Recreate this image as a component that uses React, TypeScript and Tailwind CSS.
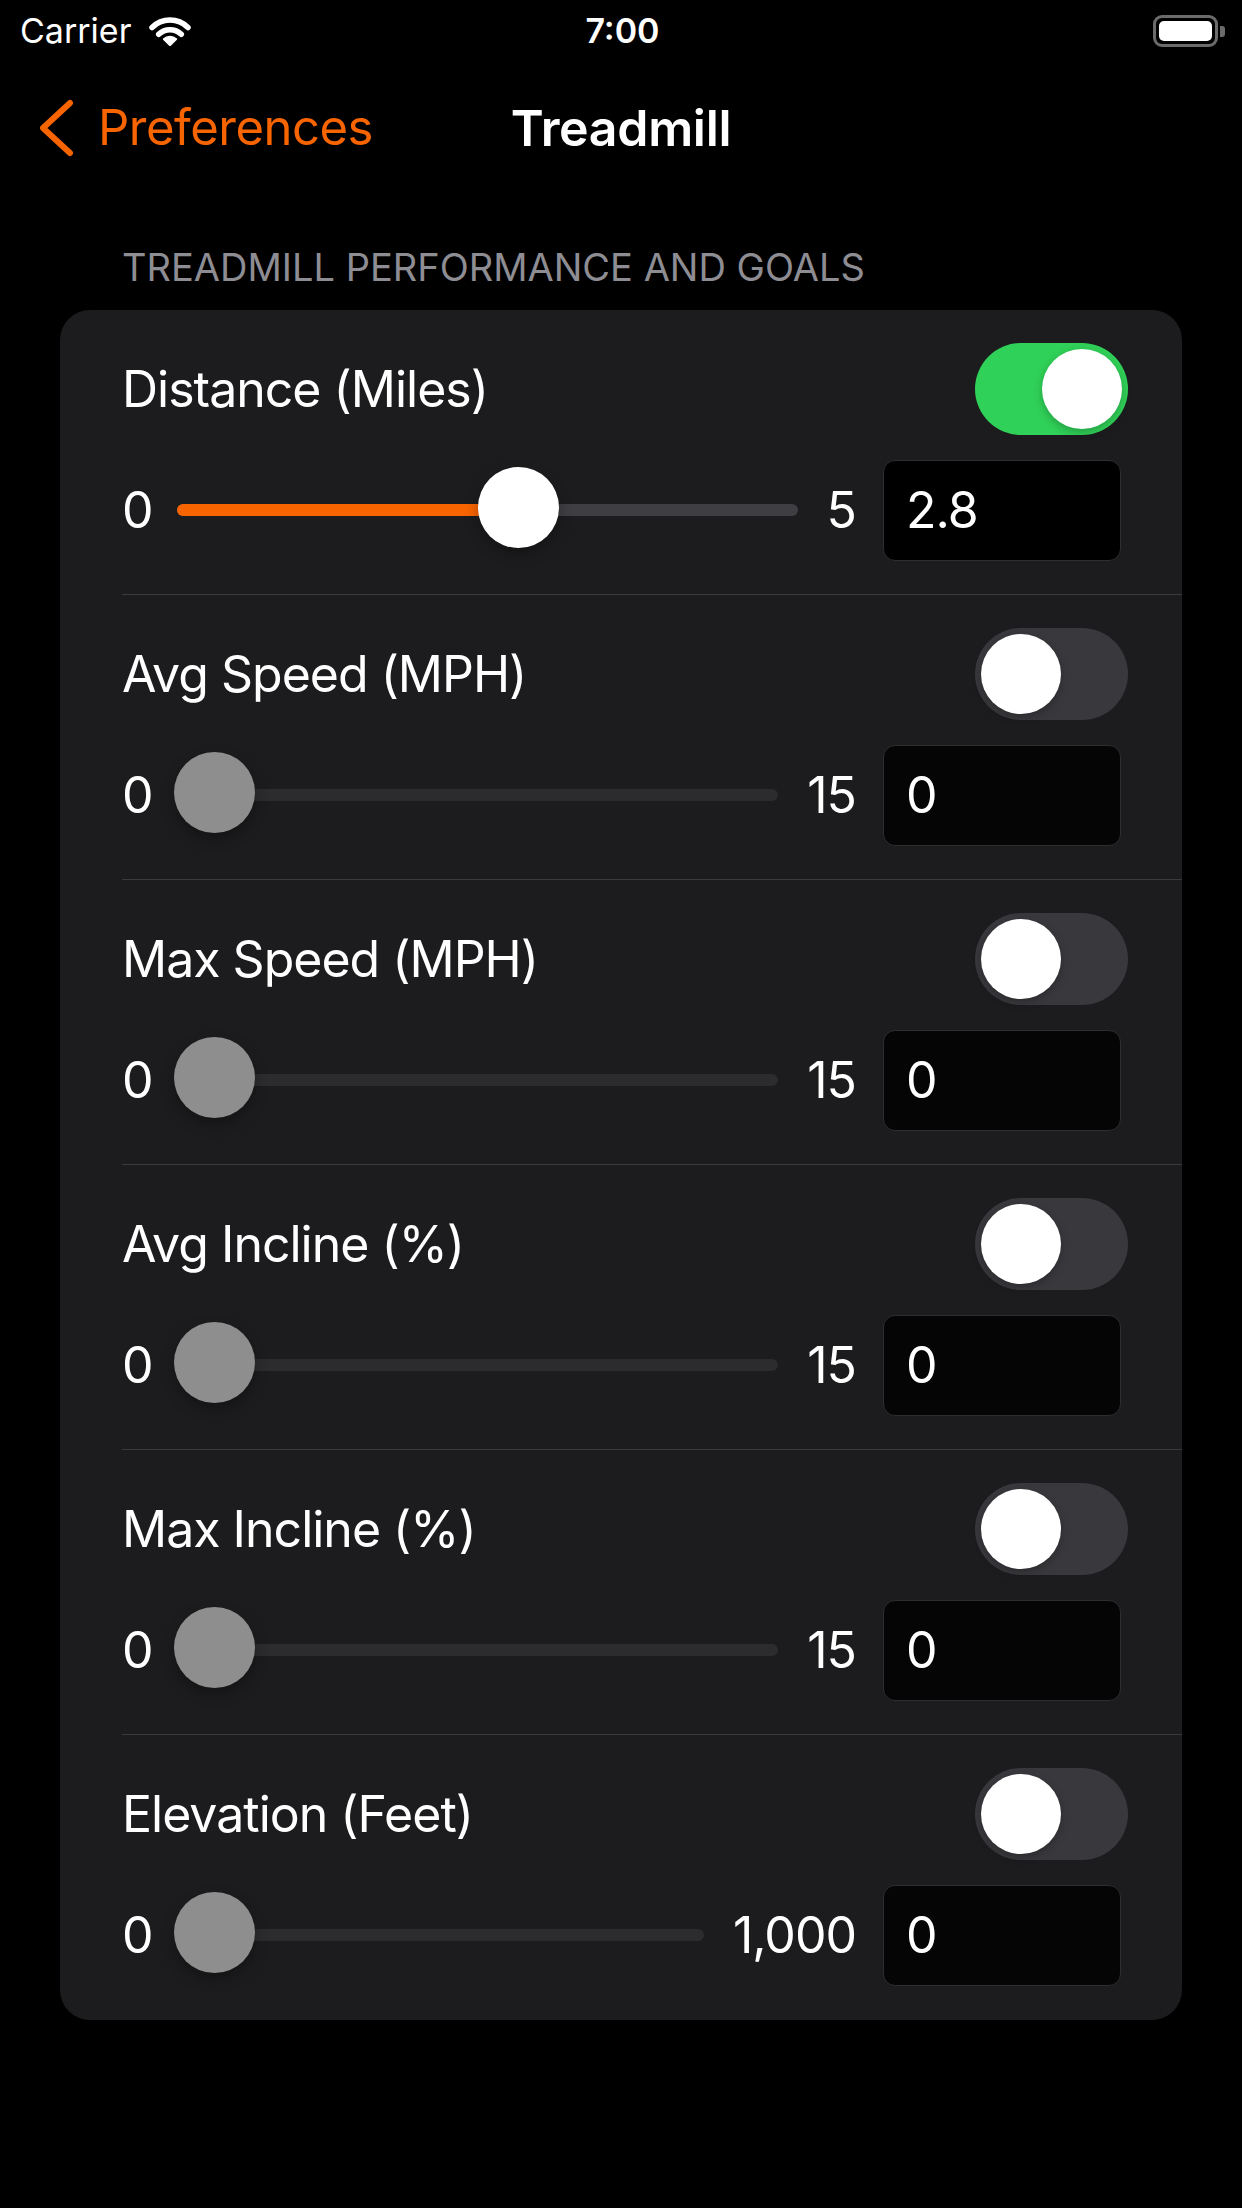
import { useState } from 'react';

type Goal = {
  label: string;
  max: string;
  value: string;
  frac: number;
  on: boolean;
};

const goals: Goal[] = [
  { label: 'Distance (Miles)', max: '5', value: '2.8', frac: 0.56, on: true },
  { label: 'Avg Speed (MPH)', max: '15', value: '0', frac: 0, on: false },
  { label: 'Max Speed (MPH)', max: '15', value: '0', frac: 0, on: false },
  { label: 'Avg Incline (%)', max: '15', value: '0', frac: 0, on: false },
  { label: 'Max Incline (%)', max: '15', value: '0', frac: 0, on: false },
  { label: 'Elevation (Feet)', max: '1,000', value: '0', frac: 0, on: false },
];

function Wifi() {
  return (
    <svg width="44" height="30" viewBox="0 0 44 30" fill="none">
      <path d="M4 11.5 A25.5 25.5 0 0 1 40 11.5" stroke="white" strokeWidth="5.5" strokeLinecap="round" />
      <path d="M10.7 18.3 A16 16 0 0 1 33.3 18.3" stroke="white" strokeWidth="5.5" strokeLinecap="round" />
      <path d="M22 29.5 L15.6 23.1 A9 9 0 0 1 28.4 23.1 Z" fill="white" stroke="white" strokeWidth="1.5" strokeLinejoin="round" />
    </svg>
  );
}

function Battery() {
  return (
    <div className="flex items-center">
      <div className="w-[65px] h-[32px] rounded-[9px] border-[3px] border-[#6b6b6b] p-[3px]">
        <div className="w-full h-full rounded-[5px] bg-white" />
      </div>
      <div className="w-[5px] h-[11px] rounded-r-[3px] bg-[#6b6b6b] ml-[2px]" />
    </div>
  );
}

function Toggle({ on }: { on: boolean }) {
  return (
    <div
      className={`w-[153px] h-[92px] rounded-full p-[6px] flex ${
        on ? 'bg-[#30d158] justify-end' : 'bg-[#39393d] justify-start'
      }`}
    >
      <div className="w-[80px] h-[80px] rounded-full bg-white shadow-[0_3px_8px_rgba(0,0,0,0.25)]" />
    </div>
  );
}

function Slider({ frac, on }: { frac: number; on: boolean }) {
  return (
    <div className="relative flex-1 h-[101px]">
      <div
        className={`absolute left-[3px] right-0 top-[44px] h-[12px] rounded-full ${
          on ? 'bg-[#3f3f43]' : 'bg-[#2c2c2e]'
        }`}
      />
      {on && (
        <div
          className="absolute left-[3px] top-[44px] h-[12px] rounded-full bg-[#f86400]"
          style={{ width: `calc((100% - 81px) * ${frac} + 40px)` }}
        />
      )}
      <div
        className={`absolute top-[7px] w-[81px] h-[81px] rounded-full shadow-[0_6px_14px_rgba(0,0,0,0.3)] ${
          on ? 'bg-white' : 'bg-[#8e8e8e]'
        }`}
        style={{ left: `calc((100% - 81px) * ${frac})` }}
      />
    </div>
  );
}

function GoalRow({ goal, last }: { goal: Goal; last: boolean }) {
  const [on] = useState(goal.on);
  return (
    <div className="pl-[62px]">
      <div className={`h-[285px] pr-[54px] pt-[33px] ${last ? '' : 'border-b border-[#3a3a3c]'}`}>
        <div className="flex items-center justify-between h-[92px]">
          <span className="text-[50px] text-white tracking-[-1px]">{goal.label}</span>
          <Toggle on={on} />
        </div>
        <div className="flex items-center h-[101px] mt-[25px] mr-[7px] text-[50px] text-white tracking-[-1px]">
          <span className="mr-[21px]">0</span>
          <Slider frac={goal.frac} on={on} />
          <span className="ml-[29px] mr-[27px]">{goal.max}</span>
          <div
            className={`w-[238px] h-[101px] rounded-[12px] border border-[#2e2e30] pl-[22px] flex items-center ${
              on ? 'bg-black' : 'bg-[#050505]'
            }`}
          >
            {goal.value}
          </div>
        </div>
      </div>
    </div>
  );
}

export default function App() {
  return (
    <div className="min-h-[2208px] w-[1242px] bg-black text-white font-['Inter','Noto_Sans',sans-serif]">
      {/* status bar */}
      <div className="grid grid-cols-3 items-center h-[62px] pl-[20px] pr-[17px]">
        <div className="flex items-center gap-[17px]">
          <span className="text-[34px] leading-none">Carrier</span>
          <Wifi />
        </div>
        <div className="text-center text-[34px] font-semibold leading-none">7:00</div>
        <div className="flex justify-end">
          <Battery />
        </div>
      </div>

      {/* nav bar */}
      <div className="grid grid-cols-[1fr_auto_1fr] items-center h-[132px]">
        <div className="flex items-center pl-[38px] gap-[24px] text-[#f86400]">
          <svg width="36" height="60" viewBox="0 0 36 60" fill="none">
            <path d="M32 5 L5 30 L32 55" stroke="#f86400" strokeWidth="6" strokeLinecap="round" strokeLinejoin="round" />
          </svg>
          <span className="text-[49px] tracking-[-0.5px]">Preferences</span>
        </div>
        <div className="text-[50px] font-semibold tracking-[-0.3px]">Treadmill</div>
        <div />
      </div>

      {/* section */}
      <div className="pl-[122px] pt-[50px] pb-[20px] text-[38px] leading-[46px] text-[#8d8d93]">
        TREADMILL PERFORMANCE AND GOALS
      </div>
      <div className="mx-[60px] rounded-[30px] bg-[#1c1c1e] overflow-hidden">
        {goals.map((g, i) => (
          <GoalRow key={g.label} goal={g} last={i === goals.length - 1} />
        ))}
      </div>
    </div>
  );
}
